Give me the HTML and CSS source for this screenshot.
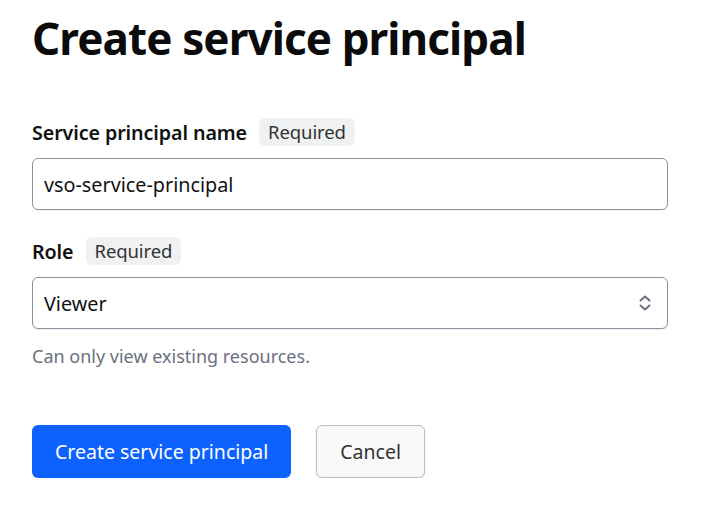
FILE: index.html
```html
<!DOCTYPE html>
<html lang="en">
<head>
<meta charset="utf-8">
<title>Create service principal</title>
<link rel="stylesheet" href="styles.css">
</head>
<body>
<main class="page">
  <h1 class="title">Create service principal</h1>
  <form class="form">
    <div class="field">
      <div class="label-row">
        <label class="label" for="name">Service principal name</label>
        <span class="badge">Required</span>
      </div>
      <input id="name" class="input" type="text" value="vso-service-principal">
    </div>
    <div class="field">
      <div class="label-row">
        <label class="label" for="role">Role</label>
        <span class="badge">Required</span>
      </div>
      <div class="select">
        <span class="select-value">Viewer</span>
        <svg class="chevrons" width="14" height="20" viewBox="0 0 14 20" fill="none" stroke="#6b7080" stroke-width="2" stroke-linecap="round" stroke-linejoin="round"><path d="M2.5 7.5 7 3.5 11.5 7.5"/><path d="M2.5 12.5 7 16.5 11.5 12.5"/></svg>
      </div>
      <p class="help">Can only view existing resources.</p>
    </div>
    <div class="actions">
      <button type="button" class="btn btn-primary">Create service principal</button>
      <button type="button" class="btn btn-secondary">Cancel</button>
    </div>
  </form>
</main>
</body>
</html>
```

FILE: styles.css
```css
* { box-sizing: border-box; }
html, body { margin: 0; padding: 0; background: #ffffff; }
body {
  font-family: "Noto Sans", "Open Sans", sans-serif;
  color: #111111;
}
.page {
  padding: 8px 33px 0 32px;
  width: 701px;
}
.title {
  margin: 0;
  font-size: 44px;
  font-weight: 700;
  line-height: 60px;
  letter-spacing: -0.9px;
  color: #0b0b0b;
}
.form {
  display: flex;
  flex-direction: column;
  margin-top: 50px;
}
.field {
  display: flex;
  flex-direction: column;
  margin-bottom: 27px;
}
.label-row {
  display: flex;
  align-items: center;
  gap: 12px;
  height: 28px;
  margin-bottom: 12px;
}
.label {
  font-size: 19.7px;
  font-weight: 600;
  color: #111;
  letter-spacing: -0.1px;
}
.badge {
  background: #f0f1f3;
  border-radius: 6px;
  padding: 0 9px;
  height: 28px;
  line-height: 28px;
  font-size: 18.5px;
  color: #333;
  letter-spacing: -0.1px;
}
.input, .select {
  width: 636px;
  height: 52px;
  border: 1px solid #8c90a0;
  border-radius: 6px;
  padding: 0 11px;
  font-family: inherit;
  font-size: 19.8px;
  color: #111;
  background: #fff;
  box-shadow: 0 1px 1px rgba(0,0,0,0.06);
}
.select {
  display: flex;
  align-items: center;
  justify-content: space-between;
  padding-right: 15px;
}
.chevrons { display: block; }
.help {
  margin: 14px 0 0;
  font-size: 18px;
  color: #6b7080;
  line-height: 26px;
}
.actions {
  display: flex;
  gap: 25px;
  margin-top: 29px;
}
.btn {
  height: 53px;
  border-radius: 6px;
  font-family: inherit;
  font-size: 19.5px;
  padding: 0 23px;
  cursor: pointer;
}
.btn-primary {
  background: #0d62ff;
  color: #ffffff;
  border: none;
}
.btn-secondary {
  background: #f8f8f8;
  color: #333;
  border: 1px solid #bdbdbd;
  box-shadow: 0 1px 2px rgba(0,0,0,0.1);
}
```
